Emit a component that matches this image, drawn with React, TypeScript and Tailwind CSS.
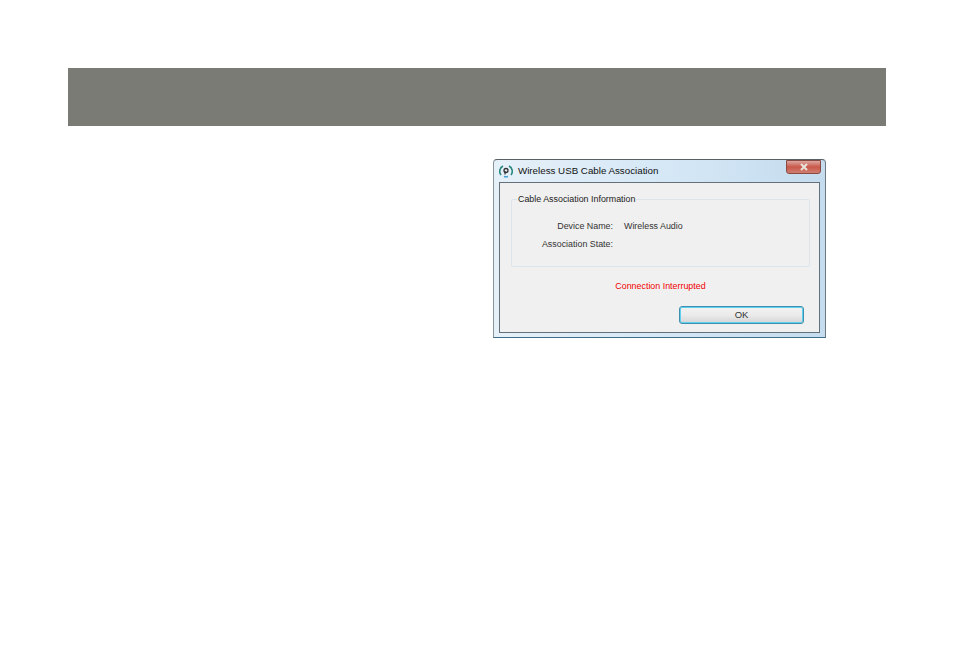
export default function App() {
  const font = { fontFamily: '"Liberation Sans", Arial, sans-serif' };
  return (
    <div className="w-[954px] h-[664px] bg-white pt-[68px] overflow-hidden" style={font}>
      <div className="ml-[68px] w-[818px] h-[58px] bg-[#7a7b74]" />
      <div className="ml-[493px] mt-[33px] w-[333px] h-[179px] flex flex-col rounded-t-[4px] border border-[#8a949b] border-t-[#5a5f63] border-b-[#3f6f88] border-r-[#6d7a84] bg-gradient-to-r from-[#e6f0f8] via-[#d6e8f6] to-[#c4dcee] px-[5px] pb-[4px]">
        <div className="h-[22px] shrink-0 flex items-center">
          <svg width="14" height="14" viewBox="0 0 14 14" className="shrink-0" fill="none">
            <path d="M4 2 A6 6 0 0 0 2 11" stroke="#2a8a80" strokeWidth="1.6" />
            <path d="M10 2 A6 6 0 0 1 12 11" stroke="#2a8a80" strokeWidth="1.6" />
            <path d="M5 12.5 A6 6 0 0 0 9 12.5" stroke="#3a9ad0" strokeWidth="1.4" />
            <circle cx="7" cy="6.5" r="2" stroke="#333" strokeWidth="1.3" />
            <path d="M6 7 V10.5" stroke="#333" strokeWidth="1.2" />
          </svg>
          <span className="ml-[5px] text-[9.75px] leading-none text-[#111] whitespace-nowrap">Wireless USB Cable Association</span>
          <div className="ml-auto mr-[-1px] mb-[8px] w-[35px] h-[14px] rounded-b-[3px] border border-[#8a4a44] bg-gradient-to-b from-[#dba79f] via-[#c9574a] to-[#cf7f70] flex items-center justify-center">
            <svg width="10" height="8" viewBox="0 0 10 8"><path d="M2 1 L8 7 M8 1 L2 7" stroke="#e8e4dc" strokeWidth="2" /></svg>
          </div>
        </div>
        <div className="flex-1 border border-[#64717a] bg-[#f0f0f0] px-[11px] flex flex-col">
          <div className="relative mt-[16px] h-[68px] w-[299px] rounded-[2px] border border-[#dce5ec]">
            <span className="absolute left-[5px] top-[-7px] bg-[#f0f0f0] px-[1px] text-[8.9px] leading-[13px] text-[#222] whitespace-nowrap">Cable Association Information</span>
            <div className="mt-[20px] flex flex-col gap-[5px] text-[8.9px] leading-[13px] text-[#333]">
              <div className="flex">
                <span className="w-[101px] text-right whitespace-nowrap">Device Name:</span>
                <span className="ml-[11px] whitespace-nowrap">Wireless Audio</span>
              </div>
              <div className="flex">
                <span className="w-[101px] text-right whitespace-nowrap">Association State:</span>
              </div>
            </div>
          </div>
          <div className="mt-[13px] text-center text-[8.9px] leading-[13px] text-[#f00000] w-[299px] whitespace-nowrap">Connection Interrupted</div>
          <div className="mt-[13px] ml-[168px] w-[125px] h-[18px] rounded-[3px] border border-[#3f8fae] shadow-[inset_0_0_0_1px_#5fd0f0] bg-gradient-to-b from-[#f2f2f2] via-[#ebebeb] to-[#d5d5d5] flex items-center justify-center text-[9.5px] text-[#333]">OK</div>
        </div>
      </div>
    </div>
  );
}
